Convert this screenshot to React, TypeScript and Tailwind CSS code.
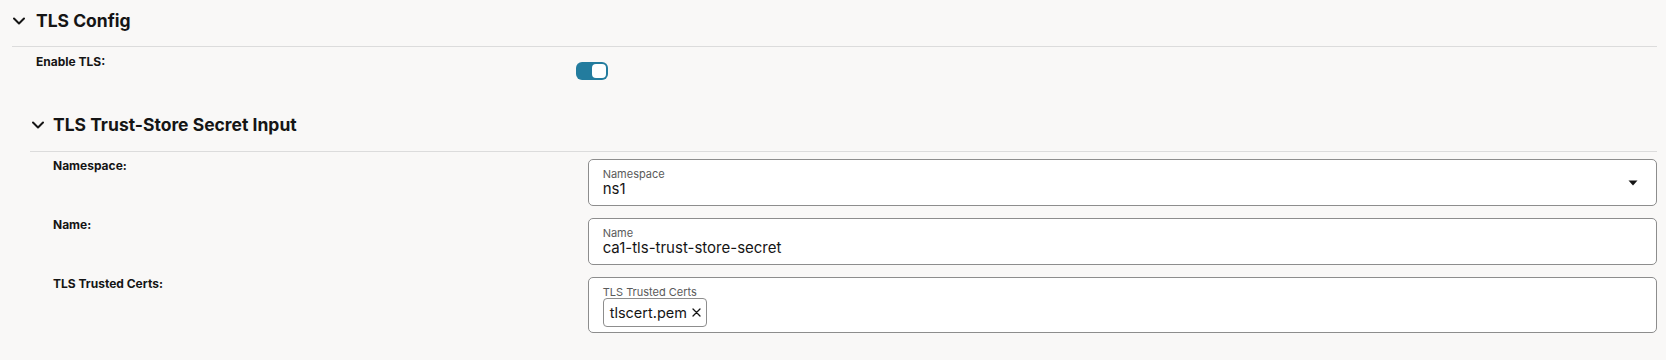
import React from "react";

const font = { fontFamily: "Inter, 'Noto Sans', sans-serif" };

const Chevron = () => (
    <svg width="12" height="8" viewBox="0 0 12 8" fill="none" stroke="currentColor" strokeWidth="2" strokeLinecap="round" strokeLinejoin="round">
        <path d="M1 1.5l5 5 5-5" />
    </svg>
);

const Caret = () => (
    <svg width="10" height="6" viewBox="0 0 10 6" fill="currentColor">
        <path d="M0.5 0.5h9L5 5.5z" />
    </svg>
);

const Toggle = () => (
    <div className="w-[32px] h-[18px] rounded-[6px] bg-[#237c9e] flex items-center justify-end pr-[2px]">
        <div className="w-[14px] h-[14px] rounded-[4px] bg-white" />
    </div>
);

interface FieldProps {
    label: string;
    value?: string;
    select?: boolean;
}

const Field = ({ label, value, select }: FieldProps) => (
    <div className="h-[47px] rounded-[5px] border border-[#8d8d8d] bg-white flex items-center pl-[14px] pr-[18px]">
        <div className="flex-1 flex flex-col pt-[1px]">
            <span className="text-[11px] leading-[12px] text-[#5a5a5a]">{label}</span>
            <span className="text-[15px] leading-[18px] text-[#151515]">{value}</span>
        </div>
        {select && <Caret />}
    </div>
);

const Row = ({ label, children }: { label: string; children: React.ReactNode }) => (
    <div className="grid grid-cols-[1fr_2fr]">
        <span className="text-[12px] leading-[12px] font-bold text-[#151515] pt-[1px]">{label}</span>
        {children}
    </div>
);

export default function App() {
    return (
        <div className="w-full h-[360px] bg-[#f9f8f7] pl-[12px] pr-[9px] text-[#151515]" style={font}>
            {/* TLS Config */}
            <div className="flex items-center pt-[7px] pb-[11px] border-b border-[#dcdcdc]">
                <span className="w-[24px] flex pl-[1px]"><Chevron /></span>
                <h2 className="text-[17.5px] leading-[28px] font-bold">TLS Config</h2>
            </div>

            <div className="pl-[24px] pt-[9px] grid grid-cols-[1fr_2fr]">
                <span className="text-[12px] leading-[12px] font-bold">Enable TLS:</span>
                <div className="pt-[6px]"><Toggle /></div>
            </div>

            {/* TLS Trust-Store Secret Input */}
            <div className="ml-[18px] mt-[31px]">
                <div className="flex items-center pb-[12px] border-b border-[#dcdcdc]">
                    <span className="w-[23px] flex pl-[2px]"><Chevron /></span>
                    <h2 className="text-[17.5px] leading-[28px] font-bold">TLS Trust-Store Secret Input</h2>
                </div>

                <div className="pl-[23px] pt-[7px] flex flex-col gap-[12px]">
                    <Row label="Namespace:">
                        <Field label="Namespace" value="ns1" select />
                    </Row>
                    <Row label="Name:">
                        <Field label="Name" value="ca1-tls-trust-store-secret" />
                    </Row>
                    <Row label="TLS Trusted Certs:">
                        <div className="h-[56px] rounded-[5px] border border-[#8d8d8d] bg-white pl-[14px] pt-[8px] flex flex-col items-start">
                            <span className="text-[11px] leading-[12px] text-[#5a5a5a]">TLS Trusted Certs</span>
                            <span className="h-[29px] rounded-[4px] border border-[#8d8d8d] flex items-center gap-[5px] pl-[6px] pr-[5px] text-[14.5px] text-[#151515]">
                                tlscert.pem
                                <svg width="9" height="9" viewBox="0 0 9 9" stroke="currentColor" strokeWidth="1.3" strokeLinecap="round">
                                    <path d="M1 1l7 7M8 1L1 8" />
                                </svg>
                            </span>
                        </div>
                    </Row>
                </div>
            </div>
        </div>
    );
}
